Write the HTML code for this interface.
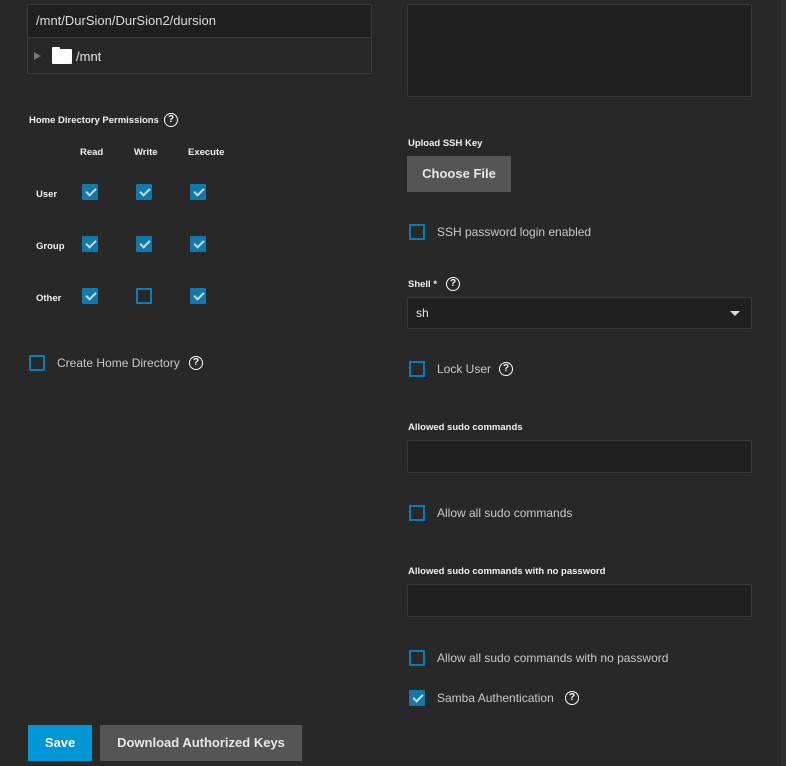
<!DOCTYPE html>
<html><head><meta charset="utf-8"><style>
*{box-sizing:border-box;margin:0;padding:0}
body{width:786px;height:766px;background:#282828;position:relative;overflow:hidden;font-family:"Liberation Sans",sans-serif;color:#e8e8e8}
.a{position:absolute}
.inp{position:absolute;background:#202020;border:1px solid #383838;border-radius:2px}
.cb{position:absolute;width:16px;height:16px;border:2px solid #0f7bb3;border-radius:1px}
.cb.on{background:#1478a8;border-color:#1478a8}
.cb.on::after{content:"";position:absolute;left:3.5px;top:0px;width:4px;height:8px;border:solid #c9d9e2;border-width:0 2px 2px 0;transform:rotate(45deg)}
.lbl{position:absolute;font-size:9.5px;font-weight:bold;color:#f0f0f0;line-height:12px;margin-top:1px}
.txt{position:absolute;font-size:12px;color:#c8c8c8;line-height:14px}
.hp{position:absolute;width:14px;height:14px;border:1.6px solid #fff;border-radius:50%;font-size:10px;font-weight:bold;color:#fff;text-align:center;line-height:11px}
.btn{position:absolute;font-weight:bold;font-size:13px;text-align:center;color:#e8e8e8}
</style></head><body>
<div class="a" style="right:0;top:0;width:5px;height:766px;background:#303030"></div>

<div class="inp" style="left:27px;top:4px;width:345px;height:34px;background:#1f1f1f"></div>
<div class="txt" style="left:36px;top:14px;font-size:13px;color:#dcdcdc">/mnt/DurSion/DurSion2/dursion</div>
<div class="a" style="left:27px;top:37px;width:345px;height:37px;border:1px solid #383838;background:#282828"></div>
<div class="a" style="left:34px;top:52px;width:0;height:0;border-left:7px solid #777;border-top:4px solid transparent;border-bottom:4px solid transparent"></div>
<div class="a" style="left:52px;top:49px;width:20px;height:15px;background:#fff;border-radius:1px"></div>
<div class="a" style="left:52px;top:47px;width:8px;height:3px;background:#fff;border-radius:1px 1px 0 0"></div>
<div class="txt" style="left:76px;top:50px;font-size:13px;color:#e6e6e6">/mnt</div>

<div class="lbl" style="left:29px;top:114px">Home Directory Permissions</div>
<div class="hp" style="left:164px;top:113px">?</div>
<div class="lbl" style="left:80px;top:146px">Read</div>
<div class="lbl" style="left:134px;top:146px">Write</div>
<div class="lbl" style="left:188px;top:146px">Execute</div>
<div class="lbl" style="left:36px;top:188px">User</div>
<div class="lbl" style="left:36px;top:240px">Group</div>
<div class="lbl" style="left:36px;top:292px">Other</div>
<div class="cb on" style="left:82px;top:184px"></div><div class="cb on" style="left:136px;top:184px"></div><div class="cb on" style="left:190px;top:184px"></div>
<div class="cb on" style="left:82px;top:236px"></div><div class="cb on" style="left:136px;top:236px"></div><div class="cb on" style="left:190px;top:236px"></div>
<div class="cb on" style="left:82px;top:288px"></div><div class="cb" style="left:136px;top:288px"></div><div class="cb on" style="left:190px;top:288px"></div>

<div class="cb" style="left:29px;top:355px"></div>
<div class="txt" style="left:57px;top:356px">Create Home Directory</div>
<div class="hp" style="left:189px;top:356px">?</div>

<div class="inp" style="left:407px;top:4px;width:345px;height:93px"></div>
<div class="lbl" style="left:408px;top:137px">Upload SSH Key</div>
<div class="btn" style="left:407px;top:156px;width:104px;height:36px;background:#555;line-height:36px">Choose File</div>
<div class="cb" style="left:409px;top:224px"></div>
<div class="txt" style="left:437px;top:225px">SSH password login enabled</div>
<div class="lbl" style="left:408px;top:278px">Shell *</div>
<div class="hp" style="left:446px;top:277px">?</div>
<div class="inp" style="left:407px;top:297px;width:345px;height:32px"></div>
<div class="txt" style="left:416px;top:306px;color:#e6e6e6">sh</div>
<div class="a" style="left:730px;top:311px;width:0;height:0;border-top:5px solid #ddd;border-left:5px solid transparent;border-right:5px solid transparent"></div>
<div class="cb" style="left:409px;top:361px"></div>
<div class="txt" style="left:437px;top:362px">Lock User</div>
<div class="hp" style="left:499px;top:362px">?</div>
<div class="lbl" style="left:408px;top:421px">Allowed sudo commands</div>
<div class="inp" style="left:407px;top:440px;width:345px;height:33px"></div>
<div class="cb" style="left:409px;top:505px"></div>
<div class="txt" style="left:437px;top:506px">Allow all sudo commands</div>
<div class="lbl" style="left:408px;top:565px">Allowed sudo commands with no password</div>
<div class="inp" style="left:407px;top:584px;width:345px;height:33px"></div>
<div class="cb" style="left:409px;top:650px"></div>
<div class="txt" style="left:437px;top:651px">Allow all sudo commands with no password</div>
<div class="cb on" style="left:409px;top:690px"></div>
<div class="txt" style="left:437px;top:691px">Samba Authentication</div>
<div class="hp" style="left:565px;top:691px">?</div>

<div class="btn" style="left:28px;top:725px;width:64px;height:36px;background:#0095d5;color:#fff;line-height:36px">Save</div>
<div class="btn" style="left:100px;top:725px;width:202px;height:36px;background:#555;line-height:36px">Download Authorized Keys</div>
</body></html>
